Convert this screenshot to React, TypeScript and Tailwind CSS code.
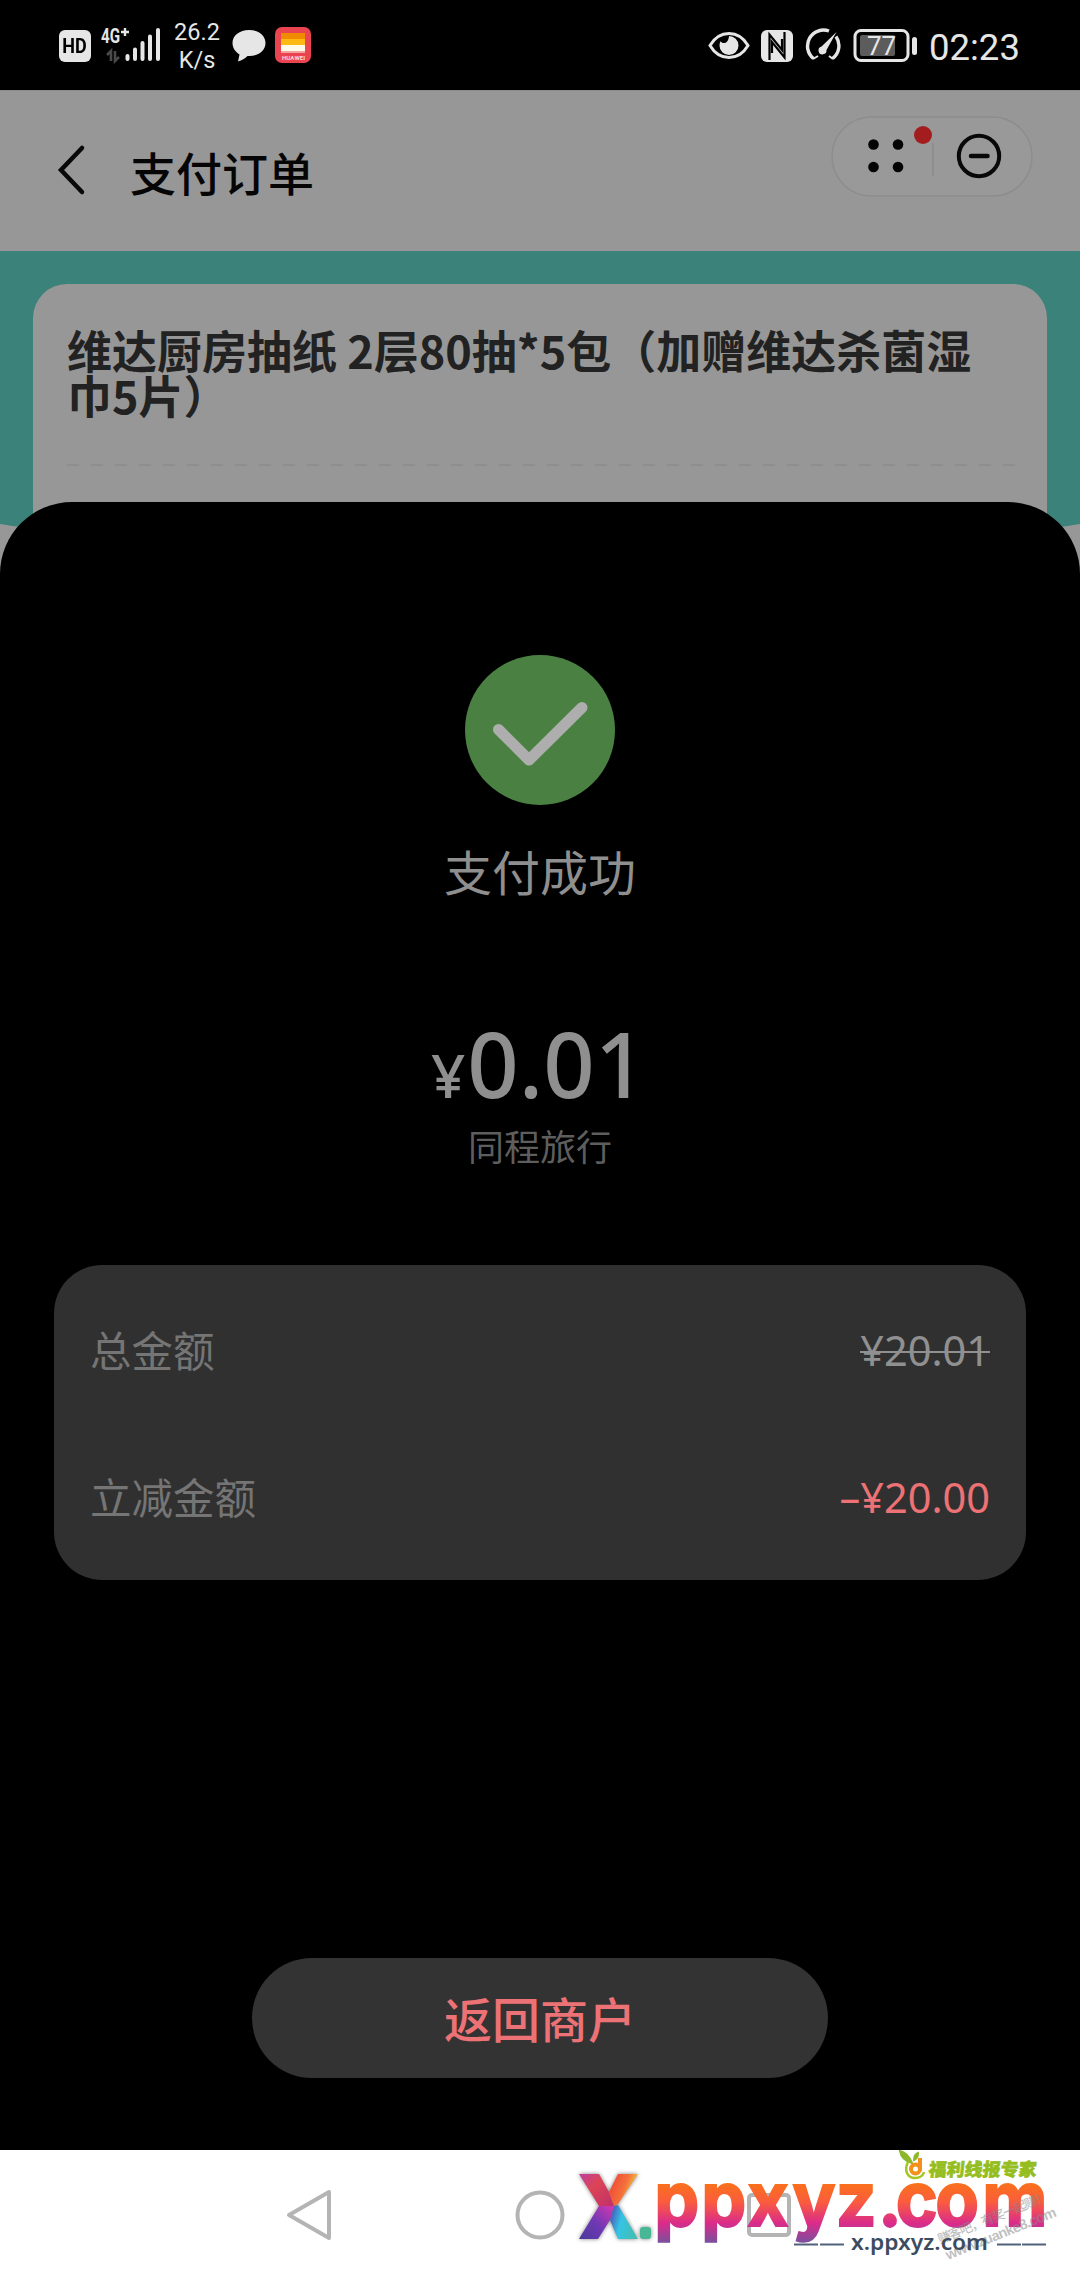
import React from 'react';

const CJK = "font-['Noto_Sans_CJK_SC',sans-serif]";
const MIX = "font-['Noto_Sans','Noto_Sans_CJK_SC',sans-serif]";

function StatusBar() {
  return (
    <div className="flex h-[90px] w-full shrink-0 justify-between bg-black pl-[59px] pr-[60px] text-[#e6e6e6]">
      <div className="flex">
        <div className="mt-[30px] flex h-[32px] w-[32px] items-center justify-center rounded-[6px] bg-[#e6e6e6] font-['Roboto',sans-serif] text-[20px] font-bold leading-none text-black">
          <span className="scale-x-[0.9]">HD</span>
        </div>
        <svg className="ml-[9px] mt-[24px]" width="62" height="40" viewBox="0 0 62 40">
          <text x="1" y="19" fontFamily="Roboto" fontWeight="700" fontSize="20" fill="#e6e6e6" textLength="19" lengthAdjust="spacingAndGlyphs">4G</text>
          <path d="M21 8h8M25 4v8" stroke="#e6e6e6" strokeWidth="2.400" />
          <path d="M11 37V27l-4 4M15 27v10l4-4" stroke="#4a4a4a" strokeWidth="2.600" fill="none" />
          <path d="M27.500 35v-3M35 35V25.500M42.500 35V19M50 35V12.500M58 35V6" stroke="#e6e6e6" strokeWidth="4" strokeLinecap="round" />
        </svg>
        <div className="ml-[12px] mt-[18px] w-[46px] text-center font-['Roboto',sans-serif] text-[23.500px] leading-[28px]">
          <div>26.2</div>
          <div>K/s</div>
        </div>
        <svg className="ml-[12px] mt-[29px]" width="34" height="34" viewBox="0 0 34 34">
          <path d="M17 1C7.500 1 .5 6.500 .5 14c0 5 3 9 7 11.500l-1.500 7c4-1 7-3 9.500-5.500H17c9.500 0 16.500-5.500 16.500-13S26.500 1 17 1z" fill="#e6e6e6" />
        </svg>
        <svg className="ml-[9px] mt-[27px]" width="36" height="36" viewBox="0 0 36 36">
          <rect width="36" height="36" rx="7" fill="#ea4450" />
          <rect x="6" y="6" width="24" height="6" fill="#f08a00" />
          <rect x="6" y="12" width="24" height="6" fill="#fdba12" />
          <rect x="6" y="18" width="24" height="6" fill="#fffbe8" />
          <rect x="6" y="24" width="24" height="2" fill="#f5a3a0" />
          <text x="7" y="32.500" fontFamily="Roboto" fontWeight="700" fontSize="6" fill="#ffd9da" textLength="23">HUAWEI</text>
        </svg>
      </div>
      <div className="flex">
        <svg className="mt-[30px]" width="42" height="32" viewBox="0 0 42 32">
          <path d="M2 15.500C7 7 14 3.500 21 3.500S35 7 40 15.500C35 24 28 27.500 21 27.500S7 24 2 15.500z" fill="none" stroke="#e6e6e6" strokeWidth="3" />
          <path d="M21 6a9.500 9.500 0 1 1-9.500 9.500c0-1.500.3-3 1-4.200 2 3 8 2.700 8.500-5.300z" fill="#e6e6e6" />
        </svg>
        <svg className="ml-[11px] mt-[30px]" width="32" height="32" viewBox="0 0 32 32">
          <rect width="32" height="32" rx="6" fill="#e6e6e6" />
          <path d="M8.500 30V4.500L21 20V9M23.500 2v25.500L11 12v11" fill="none" stroke="#000" strokeWidth="2.200" />
        </svg>
        <svg className="ml-[12px] mt-[28px]" width="36" height="34" viewBox="0 0 36 34">
          <path d="M8.500 30.500A16 16 0 0 1 24 3M31 8.500a16 16 0 0 1-3.500 22" fill="none" stroke="#e6e6e6" strokeWidth="3.400" />
          <path d="M8 31l5-3M28 31l-4-3" stroke="#e6e6e6" strokeWidth="2" />
          <path d="M31.500 4L21.500 22a4 4 0 1 1-5-3.500z" fill="#e6e6e6" />
        </svg>
        <svg className="ml-[12px] mt-[28px]" width="65" height="36" viewBox="0 0 65 36">
          <rect x="2" y="2.500" width="53" height="30" rx="6" fill="none" stroke="#e6e6e6" strokeWidth="3" />
          <rect x="7" y="7" width="35" height="21" rx="2" fill="#5c5c5c" />
          <text x="14" y="27" fontFamily="Roboto" fontSize="26" fill="#e6e6e6">77</text>
          <rect x="59" y="9" width="5" height="18" rx="2.500" fill="#e6e6e6" />
        </svg>
        <div className="ml-[11px] mt-[24px] w-[91px] whitespace-nowrap font-['Roboto',sans-serif] text-[36.500px] leading-[47px]">02:23</div>
      </div>
    </div>
  );
}

function Header() {
  return (
    <div className="flex h-[161px] w-full shrink-0 border-t border-[#8c8c8c] bg-[#979797] pr-[46px]">
      <svg className="ml-[57px] mt-[53px]" width="30" height="52" viewBox="0 0 30 52">
        <path d="M25 4L4 26l21 22" fill="none" stroke="#080808" strokeWidth="4.500" strokeLinecap="round" />
      </svg>
      <div className={`ml-[43px] mt-[47px] text-[46px] font-medium leading-[66px] text-[#050505] ${CJK}`}>支付订单</div>
      <svg className="ml-auto mt-[24px]" width="204" height="84" viewBox="0 0 204 84">
        <rect x="2" y="2" width="200" height="79" rx="39.500" fill="#999999" stroke="#8d8d8d" strokeWidth="1.500" />
        <g fill="#040404">
          <circle cx="43.500" cy="29.500" r="5.300" />
          <circle cx="68" cy="29.500" r="5.300" />
          <circle cx="43.500" cy="52" r="5.300" />
          <circle cx="68" cy="52" r="5.300" />
        </g>
        <path d="M103 28v33" stroke="#8d8d8d" strokeWidth="1.500" />
        <circle cx="93" cy="20" r="9" fill="#a31d1f" />
        <circle cx="149" cy="41" r="20.200" fill="none" stroke="#080808" strokeWidth="4" />
        <path d="M141 41h16.500" stroke="#080808" strokeWidth="4.500" strokeLinecap="round" />
      </svg>
    </div>
  );
}

function OrderArea() {
  return (
    <div className="relative -mb-[79px] h-[330px] w-full shrink-0 overflow-hidden bg-[#979797]">
      <div className="absolute -left-[60px] top-0 h-[299px] w-[1200px] rounded-b-[50%_46px] bg-[#3b827b]" />
      <div className="relative mx-[33px] pt-[33px]">
        <div className="h-[260px] rounded-t-[34px] bg-[#979797] px-[34px] pt-[43px]">
          <div className={`w-[930px] text-[45px] font-bold leading-[45px] text-[#222222] ${CJK}`}>
            维达厨房抽纸 2层80抽*5包（加赠维达杀菌湿
            <br />
            巾5片）
          </div>
          <svg className="mt-[47px]" width="948" height="4">
            <path d="M0 1h948" stroke="#8c8c8c" strokeWidth="1.500" strokeDasharray="12 12" />
          </svg>
        </div>
      </div>
    </div>
  );
}

function Row({ label, children }: { label: string; children: React.ReactNode }) {
  return (
    <div className="flex h-[147px] items-center justify-between">
      <span className={`text-[41.500px] leading-[60px] text-[#757575] ${CJK}`}>{label}</span>
      {children}
    </div>
  );
}

function Sheet() {
  return (
    <div className="relative flex h-[1648px] w-full shrink-0 flex-col items-center rounded-t-[72px] bg-black">
      <svg className="mt-[153px] shrink-0" width="150" height="150" viewBox="0 0 150 150">
        <circle cx="75" cy="75" r="75" fill="#4a8042" />
        <path d="M33.500 74.500L64 105l53-52.500" fill="none" stroke="#aeaeae" strokeWidth="11" strokeLinecap="round" strokeLinejoin="round" />
      </svg>
      <div className={`mt-[30px] text-[48px] leading-[70px] text-[#8f8f8f] ${CJK}`}>支付成功</div>
      <div className={`mt-[113px] flex h-[90px] items-baseline pr-[3px] text-[#8f8f8f] ${MIX}`}>
        <span className="text-[60px] font-medium leading-[90px]">¥</span>
        <span className="ml-[2px] text-[90px] font-medium leading-[90px]">0.01</span>
      </div>
      <div className={`mt-[11px] text-[36px] leading-[52px] text-[#5e5e5e] ${CJK}`}>同程旅行</div>
      <div className="mt-[94px] h-[315px] w-[972px] shrink-0 rounded-[48px] bg-[#303030] px-[36px] pt-[10px]">
        <Row label="总金额">
          <span className={`relative mt-[3px] text-[41.500px] leading-[60px] text-[#909090] ${MIX}`}>
            ¥20.01
            <span className="absolute left-0 top-[31px] h-[2px] w-full bg-[#909090]" />
          </span>
        </Row>
        <Row label="立减金额">
          <span className={`mt-[3px] text-[41.500px] leading-[60px] text-[#ec7276] ${MIX}`}>–¥20.00</span>
        </Row>
      </div>
      <div className={`mt-[378px] flex h-[120px] w-[576px] shrink-0 items-center justify-center rounded-full bg-[#333333] pb-[2px] text-[48px] font-medium leading-[70px] text-[#ec7276] ${CJK}`}>返回商户</div>
    </div>
  );
}

function SiteMark() {
  return (
    <svg className="absolute left-[560px] top-0" width="520" height="130" viewBox="560 2150 520 130">
      <defs>
        <linearGradient id="warm" gradientUnits="userSpaceOnUse" x1="0" y1="2184" x2="0" y2="2242">
          <stop offset="0" stopColor="#f9701c" />
          <stop offset="0.3" stopColor="#fb5d3c" />
          <stop offset="0.68" stopColor="#da2b8b" />
          <stop offset="1" stopColor="#7c4f9c" />
        </linearGradient>
        <linearGradient id="tl" x1="0" y1="0" x2="1" y2="1">
          <stop offset="0" stopColor="#bf3fa0" />
          <stop offset="0.4" stopColor="#dc4455" />
          <stop offset="1" stopColor="#c0306a" />
        </linearGradient>
        <linearGradient id="tr" x1="0" y1="0" x2="1" y2="0.4">
          <stop offset="0" stopColor="#ee3f38" />
          <stop offset="0.6" stopColor="#f4703a" />
          <stop offset="1" stopColor="#eedb48" />
        </linearGradient>
        <linearGradient id="bl" x1="0" y1="1" x2="1" y2="0">
          <stop offset="0" stopColor="#4a3a9c" />
          <stop offset="0.5" stopColor="#7138b4" />
          <stop offset="1" stopColor="#d838b0" />
        </linearGradient>
        <linearGradient id="br" x1="0" y1="0.3" x2="1" y2="0.6">
          <stop offset="0" stopColor="#4a55b8" />
          <stop offset="0.4" stopColor="#35c4e4" />
          <stop offset="1" stopColor="#42bdb0" />
        </linearGradient>
      </defs>
      <g className="drop-shadow-[0_0_2px_rgba(0,0,0,0.5)]">
        <path d="M579 2174h20l10 18 5 14-15 0z" fill="url(#tl)" />
        <path d="M618 2174h20l-20 30-4 2-5-14z" fill="url(#tr)" />
        <path d="M599 2206h15l-4 14-12 19h-19z" fill="url(#bl)" />
        <path d="M614 2206l4-1 20 34h-20l-8-19z" fill="url(#br)" />
        <rect x="640" y="2227" width="11" height="12" rx="3" fill="#48b795" />
      </g>
      <text transform="scale(0.94 1)" y="2226" x="696 746 795 843 889 934 953 995 1045" fontFamily="Inter" fontWeight="700" fontSize="76" fill="url(#warm)" stroke="url(#warm)" strokeWidth="2">ppxyz.com</text>
      <path d="M912 2163c-3-7-7-11-12-12 1 6 5 10 12 12zM914 2160c0-4 2-6 4-7 0 4-1 6-4 7z" fill="#8cb82b" stroke="#8cb82b" strokeWidth="2" />
      <path d="M908 2162c-4 8-1 16 7 16 5 0 8-2 9-6" fill="none" stroke="#a5c521" strokeWidth="2.500" />
      <circle cx="915.500" cy="2169" r="4.500" fill="none" stroke="#f39019" strokeWidth="4" />
      <path d="M920 2158v13" stroke="#f39019" strokeWidth="4" />
      <text transform="translate(928 2176) skewX(-6)" fontFamily="Noto Sans CJK SC" fontWeight="900" fontSize="18" fill="#95bd20" stroke="#95bd20" strokeWidth="0.600">福利线报专家</text>
      <g fill="#8a8a8a" fillOpacity="0.550">
        <text transform="translate(940 2244) rotate(-22)" fontFamily="Noto Sans CJK SC" fontWeight="500" fontSize="13" textLength="118">赚客吧，有奖一起赚！</text>
        <text transform="translate(948 2260) rotate(-22)" fontFamily="Liberation Sans" fontWeight="700" fontSize="14.500" textLength="118">www.zuanke8.com</text>
      </g>
      <text x="851" y="2250" fontFamily="Noto Sans" fontWeight="600" fontSize="21" fill="#3c4c60" textLength="137" lengthAdjust="spacingAndGlyphs">x.ppxyz.com</text>
      <path d="M794 2244.500h24M820 2244.500h24M997 2244.500h24M1022 2244.500h24" stroke="#50627a" strokeWidth="2" />
    </svg>
  );
}

function NavBar() {
  return (
    <div className="relative h-[130px] w-full shrink-0 bg-white">
      <div className="flex h-[130px] items-center pl-[285px]">
        <svg width="50" height="56" viewBox="0 0 50 56">
          <path d="M4 28L44 5v46z" fill="none" stroke="#b4b4b4" strokeWidth="4" strokeLinejoin="round" />
        </svg>
        <svg className="ml-[180px]" width="50" height="50" viewBox="0 0 50 50">
          <circle cx="25" cy="25" r="22.500" fill="none" stroke="#b4b4b4" strokeWidth="4" />
        </svg>
        <svg className="ml-[179px]" width="50" height="50" viewBox="0 0 50 50">
          <rect x="5" y="5" width="40" height="40" rx="3" fill="none" stroke="#b4b4b4" strokeWidth="4" />
        </svg>
      </div>
      <SiteMark />
    </div>
  );
}

export default function App() {
  return (
    <div className="flex h-[2280px] w-[1080px] flex-col overflow-hidden bg-[#979797]">
      <StatusBar />
      <Header />
      <OrderArea />
      <Sheet />
      <NavBar />
    </div>
  );
}
